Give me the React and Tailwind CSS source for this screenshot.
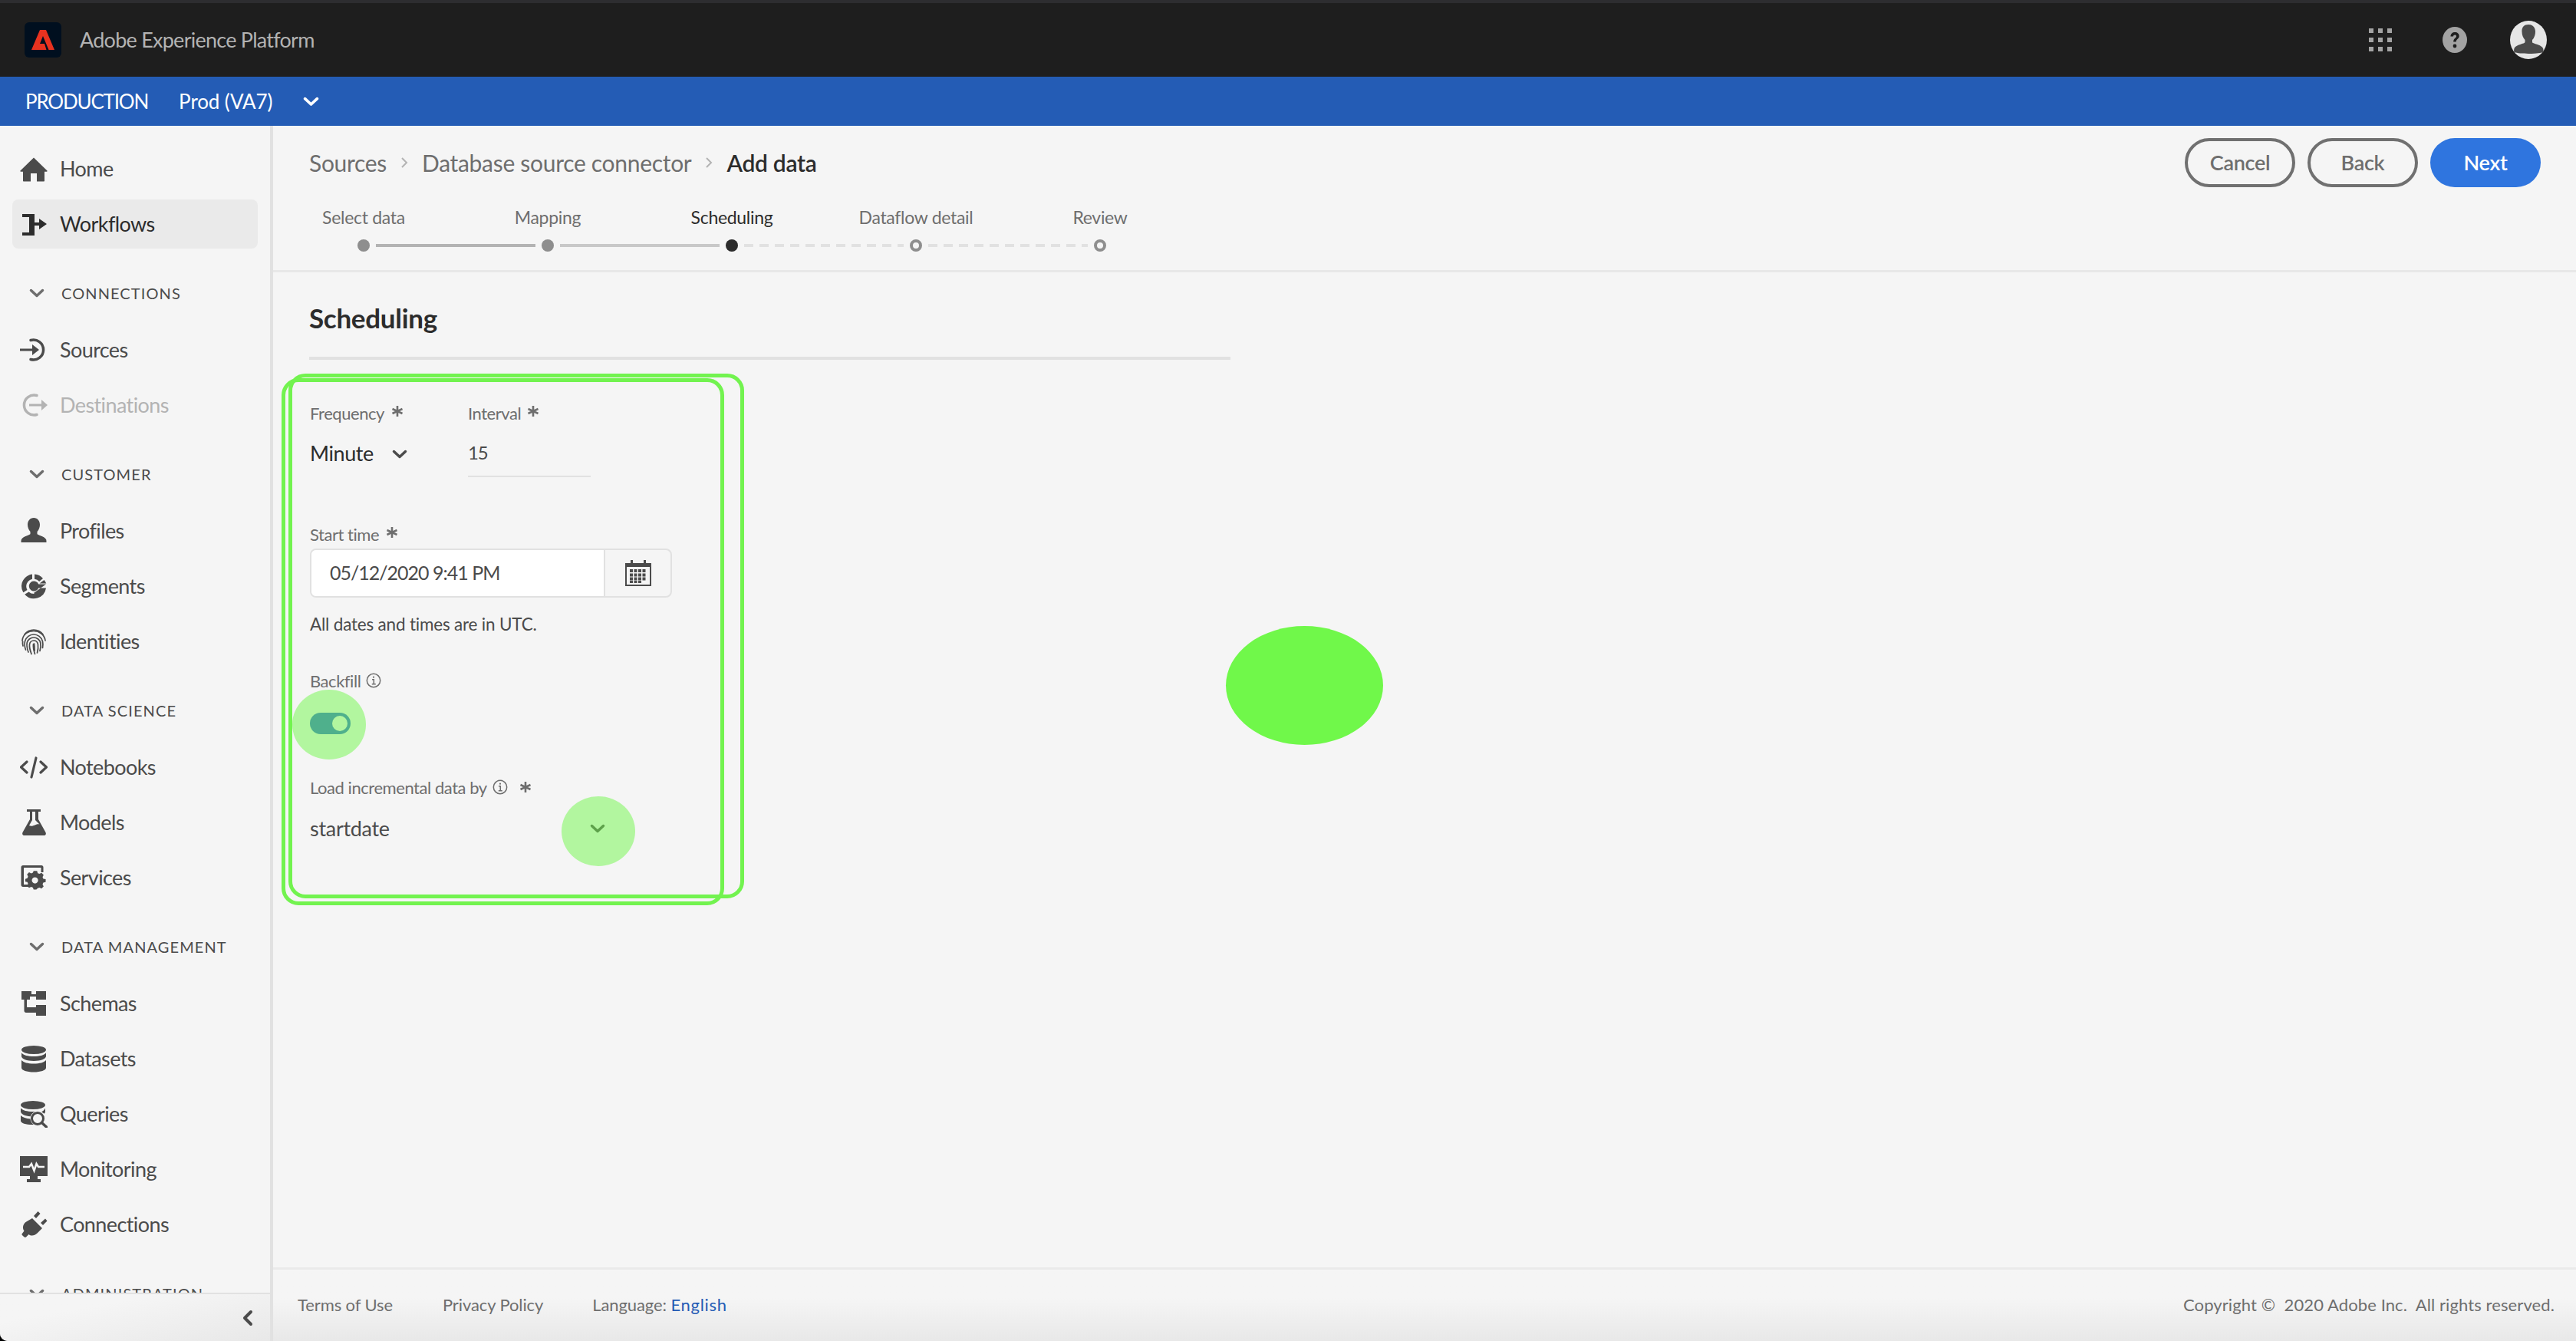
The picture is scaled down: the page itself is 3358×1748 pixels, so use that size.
const Icon = ({ children, className = "" }) => (
  <svg viewBox="0 0 36 36" className={`w-[36px] h-[36px] shrink-0 ${className}`} fill="currentColor">
    {children}
  </svg>
);

const HomeIcon = () => (
  <Icon>
    <path d="M18 3.5 0.5 20.5c-.5.6 0 1.2.6 1.2H4V33.5c0 .6.4 1 1 1h9V24h8v10.500h9c.6 0 1-.4 1-1V21.700h2.900c.6 0 1.100-.6.600-1.200Z" />
  </Icon>
);
const WorkflowIcon = () => (
  <Icon>
    <path d="M3 5h16v11h6v-5l10 7-10 7v-5h-6v13H3v-4h9V9H3Z" />
  </Icon>
);
const SourcesIcon = () => (
  <Icon>
    <path d="M14 5.500a13 13 0 1 1 0 25" fill="none" stroke="currentColor" strokeWidth="3.500" strokeLinecap="round" />
    <path d="M0 16.500h16V11l9 7-9 7v-5.500H0Z" />
  </Icon>
);
const DestinationsIcon = () => (
  <Icon>
    <path d="M22 5.500a13 13 0 1 0 0 25" fill="none" stroke="currentColor" strokeWidth="3.500" strokeLinecap="round" />
    <path d="M12 16.500h16V11l8 7-8 7v-5.500H12Z" />
  </Icon>
);
const ProfileIcon = () => (
  <Icon>
    <path d="M18 1c5 0 8 4 8 9 0 3.500-1.500 7-3.500 9v3c0 1.500 9 2.500 11.500 7 .5 1 .5 2.500.5 4H1.500c0-1.500 0-3 .5-4 2.500-4.500 11.500-5.500 11.500-7v-3c-2-2-3.500-5.500-3.500-9 0-5 3-9 8-9Z" />
  </Icon>
);
const SegmentsIcon = () => (
  <Icon>
    <path d="M2 18A16 16 0 0 1 16 2.500v6.200A10 10 0 0 0 8.200 18c0 1.800.5 3.500 1.300 5l-5.200 3.300A16 16 0 0 1 2 18Z" />
    <path d="M19 2.500a16 16 0 0 1 11 5.500l-4.800 4a10 10 0 0 0-6.200-3.300Z" />
    <path d="M34 15.500H24.300a6.500 6.500 0 1 0 0 5H34a16 16 0 0 1-27.800 8.300l5.300-3.400A10 10 0 0 0 18 28c1 0 1-1 0-1" />
    <path d="M31.500 10l-6 4.500h8.800a16 16 0 0 0-2.800-4.500Z" />
    <circle cx="18" cy="18" r="3" />
  </Icon>
);
const FingerprintIcon = () => (
  <Icon>
    <g fill="none" stroke="currentColor" strokeWidth="1.700" strokeLinecap="round">
      <path d="M6 9c6-8 18-8 24 0" />
      <path d="M3 17C4 8 11 4.500 18 4.500S32 9 33 17" />
      <path d="M4 24c-.5-2-.7-4-.4-6" />
      <path d="M7.500 29c-1.500-4-2-7-1-11 1.500-5.500 6.500-9 11.500-9s10 3.500 11.500 9c.7 3 .5 6 0 8.500" />
      <path d="M11 32c-1.500-4-2.500-8-1.800-12 .8-4 4.500-7 8.800-7s8 3 8.800 7c.6 3.500.3 7-.8 10.500" />
      <path d="M15 34.500c-1.500-4-3-8.500-2.500-12.500.4-2.800 2.800-5 5.500-5s5 2 5.500 5c.5 4 0 7.500-1 11" />
      <path d="M19.500 34.500C18 30 17 26 17.500 21.500" />
      <path d="M18.500 21c.5 4 1 8 .5 9" />
    </g>
  </Icon>
);
const NotebooksIcon = () => (
  <Icon>
    <g fill="none" stroke="currentColor" strokeWidth="3.200" strokeLinecap="round" strokeLinejoin="round">
      <path d="M9 11 1.500 18 9 25" />
      <path d="M27 11l7.500 7L27 25" />
      <path d="M21 6l-6 25" />
    </g>
  </Icon>
);
const ModelsIcon = () => (
  <Icon>
    <path d="M9 1h18v3h-3v10l9.500 17c1 2 0 4-2 4H5.500c-2 0-3-2-2-4L13 14V4H9ZM16 4v11l-4 7c3 1.500 5 .5 7.500-.5 2.500-1 4-1.500 6-1L20 15V4Z" />
  </Icon>
);
const ServicesIcon = () => (
  <Icon>
    <path d="M4 2h24c1.500 0 2.500 1 2.500 2.500V11h-3V5H5v22h6v3H4c-1.500 0-2.500-1-2.500-2.500v-23C1.500 3 2.500 2 4 2Z" />
    <path d="M22 12l1 3.200 2.500 1 3-1.500 3 3-1.500 3 1 2.500L34.500 24v4l-3.500 1-1 2.500 1.500 3-3 3-3-1.500-2.500 1L21 39h-4l-1-3-2.500-1-3 1.500-3-3 1.500-3-1-2.500L5 27.500v-4l3-1 1-2.500-1.500-3 3-3 3 1.500L16 14.500 17 12Zm-3 9a4.500 4.500 0 1 0 .01 0Z" transform="translate(2.500 -1.500) scale(.9)" fillRule="evenodd" />
  </Icon>
);
const SchemasIcon = () => (
  <Icon>
    <path d="M2 2h13v4h6V2h13v11H21V9h-8v4H9v10h12v-3h13v14H21v-4H8c-1.500 0-2.500-1-2.500-2.500V13H2Z" />
  </Icon>
);
const DatasetsIcon = () => (
  <Icon>
    <ellipse cx="18" cy="6.500" rx="16" ry="5.500" />
    <path d="M2 10.500c3 3 8 4.500 16 4.500s13-1.500 16-4.500V15c0 3-7 6-16 6S2 18 2 15Z" />
    <path d="M2 20c3 3 8 4.500 16 4.500S31 23 34 20v10c0 3-7 5.500-16 5.500S2 33 2 30Z" />
  </Icon>
);
const QueriesIcon = () => (
  <Icon>
    <ellipse cx="17" cy="6.500" rx="16" ry="5.500" />
    <path d="M1 10.500C4 13.500 9 15 17 15c1 0 2 0 3-.1-3 1-5.500 3.500-6.300 6.400C7 21 1 18 1 15Z" />
    <path d="M1 20c2.500 2.500 7 4 12.500 4.400.3 3 2 5.700 4.500 7.500-1 .1-1 .1-2 .1C8 32 1 30 1 27Z" />
    <path d="M33 10.500V15c0 1-.5 2-1.500 2.700-1-1-2-1.700-3.500-2.300 2-1 4-2.700 5-4.900Z" />
    <circle cx="23" cy="24" r="7.500" fill="none" stroke="currentColor" strokeWidth="3" />
    <path d="M28.500 29.500 34.500 35" stroke="currentColor" strokeWidth="3.500" strokeLinecap="round" />
  </Icon>
);
const MonitoringIcon = () => (
  <Icon>
    <path d="M0 1h36v26H23v4h4v4H9v-4h4v-4H0Z" />
    <path d="M4 15h8l3-4 3.500 9 3-9 2.500 4h8" fill="none" stroke="#f5f5f5" strokeWidth="2.500" />
  </Icon>
);
const ConnectionsIcon = () => (
  <Icon>
    <path d="M16 7l13 13-6.500 6.500c-3.500 3.500-8 4-11 1.500L8 31.500c-1 1-2.500 0-3.500-1s-2.500-2-2-3l3-4C3 20 3.500 15.500 7.500 12Z" transform="translate(0 3)" />
    <path d="M18 7l5.500-6 3 3L21 10Z" />
    <path d="M27 16l6-5.500 2.500 3L30 19Z" />
  </Icon>
);

const Chevron = ({ className = "", size = 20 }) => (
  <svg viewBox="0 0 20 12" width={size} height={(size * 12) / 20} className={`shrink-0 ${className}`} fill="none" stroke="currentColor" strokeWidth="3.500" strokeLinecap="round" strokeLinejoin="round">
    <path d="M2.500 2.500 10 9.500l7.500-7" />
  </svg>
);

const Asterisk = ({ className = "" }) => (
  <svg viewBox="0 0 16 16" className={`w-[16px] h-[16px] ${className}`} fill="none" stroke="#6e6e6e" strokeWidth="2.600">
    <path d="M8 1v14M1.500 5 14.500 11M14.500 5 1.500 11" />
  </svg>
);

const Info = ({ className = "" }) => (
  <svg viewBox="0 0 20 20" className={`w-[20px] h-[20px] ${className}`} fill="none" stroke="#6e6e6e">
    <circle cx="10" cy="10" r="8.700" strokeWidth="1.500" />
    <path d="M8 8.800h2.300v5.700M7.800 14.700h5" strokeWidth="1.500" />
    <circle cx="10" cy="5.700" r="1.100" fill="#6e6e6e" stroke="none" />
  </svg>
);

const NavItem = ({ icon, label, active, muted }) => (
  <div className="h-[72px] flex items-center">
    <div
      className={`ml-[16px] w-[320px] h-[64px] rounded-lg pl-[10px] flex items-center gap-[16px] text-[27px] tracking-[-0.6px] ${
        active ? "bg-[#eaeaea] text-[#2c2c2c]" : muted ? "text-[#b3b3b3]" : "text-[#4b4b4b]"
      }`}
    >
      {icon}
      <span>{label}</span>
    </div>
  </div>
);

const SectionHeader = ({ label }) => (
  <div className="mt-[18px] mb-[2px] h-[72px] flex items-center text-[#4b4b4b] shrink-0">
    <Chevron className="ml-[38px] text-[#6e6e6e]" />
    <span className="ml-[22px] text-[20px] tracking-[1.1px] uppercase">{label}</span>
  </div>
);

const Sidebar = () => (
  <aside className="w-[356px] shrink-0 border-r-[4px] border-[#e1e1e1] flex flex-col">
    <div className="flex-1 overflow-hidden pt-[20px]">
      <NavItem icon={<HomeIcon />} label="Home" />
      <NavItem icon={<WorkflowIcon />} label="Workflows" active />
      <SectionHeader label="Connections" />
      <NavItem icon={<SourcesIcon />} label="Sources" />
      <NavItem icon={<DestinationsIcon />} label="Destinations" muted />
      <SectionHeader label="Customer" />
      <NavItem icon={<ProfileIcon />} label="Profiles" />
      <NavItem icon={<SegmentsIcon />} label="Segments" />
      <NavItem icon={<FingerprintIcon />} label="Identities" />
      <SectionHeader label="Data Science" />
      <NavItem icon={<NotebooksIcon />} label="Notebooks" />
      <NavItem icon={<ModelsIcon />} label="Models" />
      <NavItem icon={<ServicesIcon />} label="Services" />
      <SectionHeader label="Data Management" />
      <NavItem icon={<SchemasIcon />} label="Schemas" />
      <NavItem icon={<DatasetsIcon />} label="Datasets" />
      <NavItem icon={<QueriesIcon />} label="Queries" />
      <NavItem icon={<MonitoringIcon />} label="Monitoring" />
      <NavItem icon={<ConnectionsIcon />} label="Connections" />
      <SectionHeader label="Administration" />
    </div>
    <div className="h-[63px] shrink-0 border-t-[2px] border-[#e1e1e1] bg-linear-to-br from-[#f5f5f5] from-30% to-[#e8e8e8] rounded-bl-[10px] flex items-center justify-end pr-[22px]">
      <svg viewBox="0 0 14 22" className="w-[14px] h-[22px] text-[#4b4b4b]" fill="none" stroke="currentColor" strokeWidth="4" strokeLinecap="round" strokeLinejoin="round">
        <path d="M11 3 3 11l8 8" />
      </svg>
    </div>
  </aside>
);

const steps = ["Select data", "Mapping", "Scheduling", "Dataflow detail", "Review"];

const Stepper = () => (
  <div className="mt-[23px]">
    <div className="flex -ml-[2px]">
      {steps.map((s, i) => (
        <div key={s} className={`w-[240px] text-center text-[23px] tracking-[-0.3px] leading-[32px] ${i === 2 ? "text-[#2c2c2c]" : "text-[#6e6e6e]"}`}>
          {s}
        </div>
      ))}
    </div>
    <div className="mt-[13px] ml-[110px] flex items-center gap-[8px]">
      <span className="w-[16px] h-[16px] rounded-full bg-[#8e8e8e]" />
      <span className="w-[208px] h-[4px] bg-[#b3b3b3]" />
      <span className="w-[16px] h-[16px] rounded-full bg-[#8e8e8e]" />
      <span className="w-[208px] h-[4px] bg-[#c8c8c8]" />
      <span className="w-[16px] h-[16px] rounded-full bg-[#2c2c2c]" />
      <span className="w-[208px] h-[4px] bg-[repeating-linear-gradient(90deg,#e1e1e1_0_12px,transparent_12px_20px)]" />
      <span className="w-[16px] h-[16px] rounded-full border-[4px] border-[#8e8e8e]" />
      <span className="w-[208px] h-[4px] bg-[repeating-linear-gradient(90deg,#e1e1e1_0_12px,transparent_12px_20px)]" />
      <span className="w-[16px] h-[16px] rounded-full border-[4px] border-[#8e8e8e]" />
    </div>
  </div>
);

const Calendar = () => (
  <svg viewBox="0 0 34 34" className="w-[34px] h-[34px]" fill="#4b4b4b">
    <path d="M7 0h3v4h14V0h3v4h7v30H0V4h7Zm-5 9v23h30V9Z" fillRule="evenodd" />
    {[12, 17.500, 22.500].map((y) =>
      [6, 11.500, 17, 22.500].map((x) => <rect key={`${x}-${y}`} x={x} y={y} width="4" height="4" />)
    )}
    <rect x="6" y="27" width="4" height="3" />
    <rect x="11.500" y="27" width="4" height="3" />
    <rect x="17" y="27" width="4" height="3" />
  </svg>
);

const FieldLabel = ({ children, className = "" }) => (
  <div className={`h-[32px] flex items-center text-[22px] tracking-[-0.45px] text-[#6e6e6e] ${className}`}>{children}</div>
);

const Form = () => (
  <div className="w-[500px] ml-[1px] text-[#2c2c2c]">
    <div className="mt-[53px] flex">
      <div className="w-[206px]">
        <FieldLabel>
          Frequency
          <Asterisk className="ml-[9px] -mt-[4px]" />
        </FieldLabel>
        <div className="h-[68px] pt-[7px] flex items-center text-[27px] tracking-[-0.4px]">
          Minute
          <Chevron className="ml-[24px] text-[#4b4b4b]" />
        </div>
      </div>
      <div className="w-[160px]">
        <FieldLabel>
          Interval
          <Asterisk className="ml-[8px] -mt-[4px]" />
        </FieldLabel>
        <div className="h-[68px] pt-[7px] border-b-[2px] border-[#e1e1e1] flex items-center text-[24px] tracking-[-1.2px] text-[#4b4b4b] pb-[2px]">15</div>
      </div>
    </div>

    <FieldLabel className="mt-[58px]">
      Start time
      <Asterisk className="ml-[9px] -mt-[4px]" />
    </FieldLabel>
    <div className="mt-[3px] w-[472px] h-[64px] rounded-lg border-[2px] border-[#e1e1e1] flex overflow-hidden">
      <div className="w-[383px] bg-white border-r-[2px] border-[#e1e1e1] pl-[24px] flex items-center text-[25px] tracking-[-1px] text-[#4b4b4b]">
        05/12/2020 9:41 PM
      </div>
      <div className="flex-1 flex items-center justify-center">
        <Calendar />
      </div>
    </div>
    <div className="mt-[19px] h-[32px] flex items-center text-[22.500px] tracking-[-0.2px] text-[#4b4b4b]">All dates and times are in UTC.</div>

    <FieldLabel className="mt-[41px]">
      Backfill
      <Info className="ml-[7px]" />
    </FieldLabel>
    <div className="mt-[26px] w-[53px] h-[28px] rounded-full bg-[#2f68cf] flex items-center justify-end pr-[4px]">
      <span className="w-[20px] h-[20px] rounded-full bg-[#f5f5f5]" />
    </div>

    <FieldLabel className="mt-[53px]">
      Load incremental data by
      <Info className="ml-[7px]" />
      <Asterisk className="ml-[15px]" />
    </FieldLabel>
    <div className="mt-[6px] h-[64px] w-[385px] flex items-center justify-between text-[27px] tracking-[-0.3px]">
      <span className="text-[#4b4b4b]">startdate</span>
      <Chevron className="text-[#4b4b4b]" />
    </div>
  </div>
);

const PillButton = ({ children, primary }) => (
  <button
    className={`w-[144px] h-[64px] rounded-full text-[27px] font-semibold ${
      primary ? "bg-[#2f75df] text-white" : "border-[4px] border-[#707070] text-[#6e6e6e]"
    }`}
  >
    {children}
  </button>
);

export default function App() {
  return (
    <div className="relative w-full h-screen overflow-hidden flex flex-col bg-black [font-family:Lato,sans-serif]">
      <header className="h-[100px] shrink-0 bg-[#1e1e1e] border-t-[4px] border-[#2d2d30] flex items-center">
        <div className="ml-[32px] w-[48px] h-[46px] rounded-md bg-[#000f1f] flex items-center justify-center">
          <svg viewBox="0 0 30 26" className="w-[30px] h-[26px]" fill="#e8321f">
            <path d="M11 0h8l11 26h-7.500L15 8 11 18h6l2.500 8H0Z" />
          </svg>
        </div>
        <span className="ml-[24px] text-[27px] tracking-[-0.75px] text-[#b3b3b3]">Adobe Experience Platform</span>
        <div className="ml-auto flex items-center">
          <div className="grid grid-cols-3 gap-[6px]">
            {Array.from({ length: 9 }).map((_, i) => (
              <span key={i} className="w-[6px] h-[6px] bg-[#a3a3a3]" />
            ))}
          </div>
          <svg viewBox="0 0 32 34" className="ml-[66px] w-[32px] h-[34px]">
            <ellipse cx="16" cy="17" rx="16" ry="17" fill="#a3a3a3" />
            <path d="M10.500 12.500c0-3.500 2.500-5.500 5.700-5.500s5.500 2 5.500 5c0 3.500-4 4-4 7.500h-3.500c0-4.500 3.800-5 3.800-7.300 0-1-.8-1.700-1.900-1.700-1.200 0-2 .8-2.100 2Z" fill="#1e1e1e" />
            <circle cx="16" cy="25" r="2.400" fill="#1e1e1e" />
          </svg>
          <svg viewBox="0 0 48 50" className="ml-[56px] mr-[38px] w-[48px] h-[50px]">
            <ellipse cx="24" cy="25" rx="24" ry="25" fill="#e6e6e6" />
            <path d="M24 5c6 0 9 4 9 9.500 0 4-1.500 8-4 10.500v3c0 2 12 3 14 8 .6 2 .5 4 .5 5-3 2-30 3-38 0-.5-1 -.6-3 0-5 2-5 14-6 14-8v-3c-2.500-2.500-4-6.500-4-10.500C15 9 18 5 24 5Z" fill="#4b4b4b" />
          </svg>
        </div>
      </header>

      <div className="h-[64px] shrink-0 bg-[#245cb5] flex items-center text-white text-[26px]">
        <span className="ml-[33px] tracking-[-1.2px]">PRODUCTION</span>
        <span className="ml-[40px] tracking-[-0.1px]">Prod (VA7)</span>
        <Chevron className="ml-[40px]" size={21} />
      </div>

      <div className="flex-1 min-h-0 flex bg-[#f5f5f5] rounded-bl-[10px]">
        <Sidebar />
        <main className="flex-1 min-w-0 flex flex-col">
          <div className="flex-1 min-h-0">
            <div className="h-[191px] border-b-[3px] border-[#e8e8e8] pt-[16px]">
              <div className="h-[64px] flex items-center pl-[47px] pr-[46px] text-[30px] tracking-[-0.3px] text-[#6e6e6e]">
                <span>Sources</span>
                <svg viewBox="0 0 10 16" className="mx-[18px] w-[10px] h-[16px]" fill="none" stroke="#b3b3b3" strokeWidth="2">
                  <path d="M2 2l6 6-6 6" />
                </svg>
                <span>Database source connector</span>
                <svg viewBox="0 0 10 16" className="mx-[18px] w-[10px] h-[16px]" fill="none" stroke="#b3b3b3" strokeWidth="2">
                  <path d="M2 2l6 6-6 6" />
                </svg>
                <span className="font-semibold text-[#2c2c2c]">Add data</span>
                <div className="ml-auto flex gap-[16px]">
                  <PillButton>Cancel</PillButton>
                  <PillButton>Back</PillButton>
                  <PillButton primary>Next</PillButton>
                </div>
              </div>
              <Stepper />
            </div>
            <div className="pl-[47px]">
              <h2 className="mt-[35px] h-[48px] flex items-center text-[35px] font-bold tracking-[-0.3px] text-[#2c2c2c]">Scheduling</h2>
              <div className="mt-[27px] w-[1201px] h-[4px] bg-[#e1e1e1]" />
              <Form />
            </div>
          </div>
          <footer className="h-[96px] shrink-0 border-t-[3px] border-[#eaeaea] bg-linear-to-b from-[#f5f5f5] from-40% to-[#e8e8e8] pl-[32px] pr-[28px] pb-[3px] flex items-center text-[22px] tracking-[-0.1px] text-[#6e6e6e]">
            <span>Terms of Use</span>
            <span className="ml-[65px]">Privacy Policy</span>
            <span className="ml-[64px]">Language: <span className="text-[#245cb5] tracking-[0.7px]">English</span></span>
            <span className="ml-auto tracking-[0.1px]">Copyright ©&nbsp;&nbsp;2020 Adobe Inc.&nbsp;&nbsp;All rights reserved.</span>
          </footer>
        </main>
      </div>

      {/* annotations drawn over the screenshot */}
      <div className="absolute left-[367px] top-[493px] w-[577px] h-[687px] rounded-[22px] border-[5px] border-[#72f34f] pointer-events-none" />
      <div className="absolute left-[376px] top-[487px] w-[594px] h-[684px] rounded-[22px] border-[5px] border-[#72f34f] pointer-events-none" />
      <div className="absolute left-[1598px] top-[816px] w-[205px] h-[155px] rounded-[50%] bg-[#70f84a]" />
      <div className="absolute left-[381px] top-[899px] w-[96px] h-[91px] rounded-[50%] bg-[#70f84a]/50" />
      <div className="absolute left-[732px] top-[1038px] w-[96px] h-[91px] rounded-[50%] bg-[#70f84a]/50" />
    </div>
  );
}
